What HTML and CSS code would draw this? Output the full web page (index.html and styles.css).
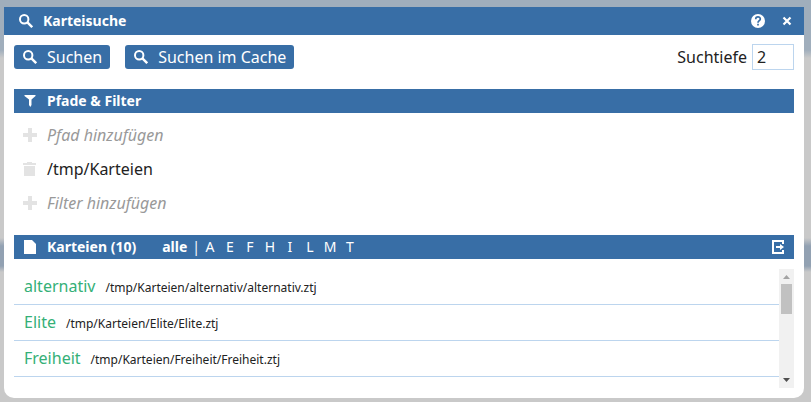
FILE: index.html
```html
<!DOCTYPE html>
<html lang="de">
<head>
<meta charset="utf-8">
<title>Karteisuche</title>
<link rel="stylesheet" href="styles.css">
</head>
<body>
<svg class="symbols" aria-hidden="true">
  <symbol id="search" viewBox="0 0 14 14"><circle cx="5.2" cy="5.2" r="4.2" fill="none" stroke="currentColor" stroke-width="2"/><path d="M8.2 8.2L13.2 13.2" stroke="currentColor" stroke-width="2.4"/></symbol>
  <symbol id="plus" viewBox="0 0 14 14"><path d="M5 0h4v5h5v4H9v5H5V9H0V5h5z" fill="currentColor"/></symbol>
</svg>
<main class="window">
  <header class="titlebar">
    <svg class="icon"><use href="#search"/></svg>
    <h1 class="title">Karteisuche</h1>
    <button class="icon-button" aria-label="Hilfe"><svg class="icon" viewBox="0 0 14 14"><circle cx="7" cy="7" r="7" fill="#fff"/><path d="M4.7 5.2C4.7 2.2 9.3 2.2 9.3 5C9.3 6.7 7 6.7 7 8.8M7 9.8v1.8" fill="none" stroke="#386ea6" stroke-width="1.7"/></svg></button>
    <button class="icon-button" aria-label="Schließen"><svg class="icon" viewBox="0 0 14 14"><path d="M3.500 3.500l7 7M10.500 3.500l-7 7" stroke="#fff" stroke-width="2.2"/></svg></button>
  </header>
  <div class="content">
    <div class="toolbar">
      <button class="action"><svg class="icon"><use href="#search"/></svg>Suchen</button>
      <button class="action"><svg class="icon"><use href="#search"/></svg>Suchen im Cache</button>
      <label class="depth-label" for="depth">Suchtiefe</label>
      <input class="depth" id="depth" type="text" value="2">
    </div>
    <section class="filters">
      <h2 class="bar"><svg class="icon" viewBox="0 0 14 14"><path d="M1.500 1h11v1L8.500 5.500V11L7.300 13L6 11V5.500L1.500 2z" fill="#fff"/></svg>Pfade &amp; Filter</h2>
      <button class="entry hint"><svg class="icon"><use href="#plus"/></svg>Pfad hinzufügen</button>
      <button class="entry"><svg class="icon" viewBox="0 0 14 14"><path d="M0 1h4V0h5v1h4v2H0zM1 4h11v10H1z" fill="currentColor"/></svg>/tmp/Karteien</button>
      <button class="entry hint"><svg class="icon"><use href="#plus"/></svg>Filter hinzufügen</button>
    </section>
    <section class="results">
      <div class="bar">
        <svg class="icon" viewBox="0 0 14 14"><path d="M1 0h8l4 4v10H1z" fill="#fff"/></svg>
        <h2 class="heading">Karteien (10)</h2>
        <nav class="letters">
          <a class="all" href="#">alle</a><span class="divider">|</span>
          <a href="#">A</a><a href="#">E</a><a href="#">F</a><a href="#">H</a><a href="#">I</a><a href="#">L</a><a href="#">M</a><a href="#">T</a>
        </nav>
        <button class="icon-button export" aria-label="Exportieren"><svg class="icon" viewBox="0 0 14 14"><path d="M12 4V1H2v12h10v-3" fill="none" stroke="#fff" stroke-width="2"/><path d="M5 6h4V4L13 7l-4 3V8H5z" fill="#fff"/></svg></button>
      </div>
      <div class="list-frame">
        <ul class="list">
          <li class="file"><a class="name" href="#">alternativ</a><span class="path">/tmp/Karteien/alternativ/alternativ.ztj</span></li>
          <li class="file"><a class="name" href="#">Elite</a><span class="path">/tmp/Karteien/Elite/Elite.ztj</span></li>
          <li class="file"><a class="name" href="#">Freiheit</a><span class="path">/tmp/Karteien/Freiheit/Freiheit.ztj</span></li>
        </ul>
        <div class="scrollbar" aria-hidden="true">
          <svg class="arrow" viewBox="0 0 15 15"><path d="M4 10h7L7.500 6z" fill="#a3a3a3"/></svg>
          <div class="thumb"></div>
          <svg class="arrow arrow-down" viewBox="0 0 15 15"><path d="M4 5h7L7.500 9z" fill="#505050"/></svg>
        </div>
      </div>
    </section>
  </div>
</main>
</body>
</html>
```
FILE: styles.css
```css
* { box-sizing: border-box; }
html { height: 100%; }
body {
  height: 100%;
  margin: 0;
  padding: 7px 7px 4px 4px;
  font: 16px/24px "Noto Sans", sans-serif;
  color: #222;
  background: linear-gradient(#a0aebc 0, #a0aebc 50px, #c9c9c9 58px, #c9c9c9 238px, #92a1b2 246px, #92a1b2 266px, #c9c9c9 272px);
}
button { margin: 0; padding: 0; border: 0; background: none; font: inherit; color: inherit; cursor: pointer; }
h1, h2 { margin: 0; font-size: 14px; font-weight: 700; }
a { color: inherit; text-decoration: none; }
.symbols { display: none; }
.icon { display: block; flex: none; width: 14px; height: 14px; }
.window { display: flex; flex-direction: column; height: 100%; border-radius: 0 0 10px 10px; background: #fff; overflow: hidden; }
.titlebar { display: flex; align-items: center; gap: 15px; height: 28px; flex: none; padding: 0 10px 0 15px; background: #386ea6; color: #fff; }
.title { flex: 1; margin-left: -5px; }
.content { display: flex; flex-direction: column; flex: 1; min-height: 0; padding: 9px 10px 10px; }
.toolbar { display: flex; align-items: center; height: 26px; flex: none; }
.action { display: flex; align-items: center; gap: 10px; height: 24px; margin-right: 15px; padding: 0 8px 0 9px; border-radius: 3px; background: #386ea6; color: #fff; }
.depth-label { margin-left: auto; }
.depth { width: 42px; height: 26px; margin-left: 5px; padding: 0 4px; border: 1px solid #bcd5ee; font: inherit; color: inherit; background: #fff; }
.bar { display: flex; align-items: center; gap: 10px; height: 24px; flex: none; padding: 0 9px; background: #386ea6; color: #fff; font-size: 14px; }
.filters { display: flex; flex-direction: column; gap: 10px; margin-top: 19px; }
.entry { display: flex; align-items: center; gap: 10px; padding: 0 9px; text-align: left; }
.entry .icon { color: #e3e3e3; }
.hint { color: #999; font-style: italic; }
.results { display: flex; flex-direction: column; flex: 1; min-height: 0; margin-top: 20px; }
.letters { display: flex; margin-left: 16px; }
.letters a { width: 20px; text-align: center; }
.letters .all { width: auto; font-weight: 700; }
.divider { margin: 0 0 0 5px; }
.export { margin-left: auto; }
.list-frame { display: flex; flex: 1; min-height: 0; margin-top: 10px; }
.list { flex: 1; margin: 0; padding: 0; list-style: none; overflow: hidden; }
.file { display: flex; align-items: baseline; gap: 10px; height: 36px; padding: 5px 10px; border-bottom: 1px solid #bcd5ee; }
.name { color: #34b077; }
.path { font-size: 12px; }
.scrollbar { display: flex; flex-direction: column; width: 15px; background: #f1f1f1; }
.arrow { display: block; width: 15px; height: 15px; }
.arrow-down { margin-top: auto; }
.thumb { height: 30px; margin: 0 2px; background: #c1c1c1; }
```
